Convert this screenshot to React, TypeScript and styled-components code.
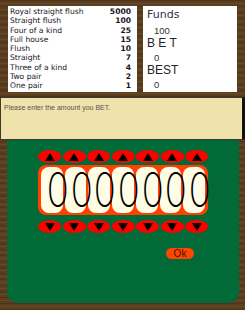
import React from "react";
import styled, {createGlobalStyle, css} from "styled-components";

const PAYOUTS: [string, number][] = [
    ["Royal straight flush", 5000],
    ["Straight flush", 100],
    ["Four of a kind", 25],
    ["Full house", 15],
    ["Flush", 10],
    ["Straight", 7],
    ["Three of a kind", 4],
    ["Two pair", 2],
    ["One pair", 1],
];

const DIGITS = [0, 0, 0, 0, 0, 0, 0];

const GlobalStyle = createGlobalStyle`
  html, body {
    margin: 0;
    padding: 0;
    background: #5a3c1f;
  }

  body {
    width: 245px;
    height: 310px;
    overflow: hidden;
    font-family: "Liberation Sans", Arial, sans-serif;
  }
`;

const wood = css`
  background-color: #5b3d20;
  background-image: repeating-linear-gradient(
    0deg,
    rgba(0, 0, 0, 0.16) 0 1px,
    transparent 1px 3px,
    rgba(255, 220, 160, 0.08) 3px 4px,
    transparent 4px 6px
  );
`;

const Triangle: React.FC<{down?: boolean}> = ({down}) => (
    <svg width="10" height="8" viewBox="0 0 10 8">
        {down
            ? <polygon points="0,0 10,0 5,8" fill="#000"/>
            : <polygon points="5,0 10,8 0,8" fill="#000"/>}
    </svg>
);

export default function App() {
    return (
        <>
            <GlobalStyle/>
            <Screen>
                <TopFrame>
                    <PayTable>
                        {PAYOUTS.map(([hand, pay]) => (
                            <PayRow key={hand}>
                                <span>{hand}</span>
                                <Payout>{pay}</Payout>
                            </PayRow>
                        ))}
                    </PayTable>
                    <FundsPanel>
                        <FundsTitle>Funds</FundsTitle>
                        <Value>100</Value>
                        <Label>B E T</Label>
                        <Value>0</Value>
                        <Label>BEST</Label>
                        <Value>0</Value>
                    </FundsPanel>
                </TopFrame>
                <MessageBar>Please enter the amount you BET.</MessageBar>
                <TableArea>
                    <Felt>
                        <ArrowRow>
                            {DIGITS.map((_, i) => (
                                <ArrowButton key={i}><Triangle/></ArrowButton>
                            ))}
                        </ArrowRow>
                        <DigitPanel>
                            {DIGITS.map((d, i) => (
                                <DigitCell key={i}><Digit>{d}</Digit></DigitCell>
                            ))}
                        </DigitPanel>
                        <ArrowRow $down>
                            {DIGITS.map((_, i) => (
                                <ArrowButton key={i}><Triangle down/></ArrowButton>
                            ))}
                        </ArrowRow>
                        <OkRow>
                            <OkButton>Ok</OkButton>
                        </OkRow>
                    </Felt>
                </TableArea>
            </Screen>
        </>
    );
}

const Screen = styled.div`
  width: 245px;
  height: 310px;
  display: flex;
  flex-direction: column;
`

const TopFrame = styled.div`
  ${wood};
  height: 97px;
  box-sizing: border-box;
  padding: 6px 8px 5px 8px;
  display: flex;
  gap: 6px;
`

const PayTable = styled.div`
  width: 129px;
  box-sizing: border-box;
  background: #fff;
  padding: 1px 6px 0 2px;
  font-family: "DejaVu Sans", Verdana, sans-serif;
  font-size: 7.6px;
  line-height: 9.3px;
  color: #161622;
`

const PayRow = styled.div`
  display: flex;
  justify-content: space-between;
`

const Payout = styled.span`
  font-weight: bold;
`

const FundsPanel = styled.div`
  width: 94px;
  box-sizing: border-box;
  background: #fff;
  padding: 2px 4px 0 4px;
  display: flex;
  flex-direction: column;
  color: #222;
`

const FundsTitle = styled.div`
  font-family: "DejaVu Sans", Verdana, sans-serif;
  font-size: 11px;
  line-height: 14px;
  color: #2b3445;
`

const Label = styled.div`
  margin-top: -3px;
  font-size: 12px;
  line-height: 12px;
`

const Value = styled.div`
  padding-left: 7px;
  font-size: 9.5px;
  line-height: 18px;
  color: #333;
`

const MessageBar = styled.div`
  height: 43px;
  box-sizing: border-box;
  background: #efe2ab;
  border: 1px solid #3d3a2c;
  border-right: 3px solid #111;
  padding: 5px 3px 0 3px;
  font-size: 7px;
  line-height: 9px;
  color: #555;
`

const TableArea = styled.div`
  ${wood};
  flex: 1;
  padding: 0 6px 7px 7px;
  display: flex;
`

const Felt = styled.div`
  flex: 1;
  background: #026a37;
  border-radius: 0 0 11px 11px;
  padding-top: 10px;
  display: flex;
  flex-direction: column;
  align-items: center;
`

const ArrowRow = styled.div<{$down?: boolean}>`
  display: flex;
  gap: 1.5px;
  margin-top: ${p => (p.$down ? "5px" : "0")};
`

const ArrowButton = styled.div`
  width: 23px;
  height: 13px;
  border-radius: 50%;
  background: #ff0000;
  display: flex;
  align-items: center;
  justify-content: center;
`

const DigitPanel = styled.div`
  width: 170px;
  box-sizing: border-box;
  margin-top: 2px;
  padding: 2px 3px;
  background: #ff4000;
  border-radius: 8px;
  display: flex;
  gap: 2px;
`

const DigitCell = styled.div`
  flex: 1;
  min-width: 0;
  height: 46px;
  background: #fffde6;
  border-radius: 8px;
  display: flex;
  align-items: center;
  justify-content: center;
`

const Digit = styled.span`
  display: inline-block;
  width: 14px;
  text-align: center;
  font-family: Inter, "Liberation Sans", sans-serif;
  font-weight: 200;
  font-size: 48px;
  line-height: 1;
  color: #000;
  transform: scaleX(0.76);
`

const OkRow = styled.div`
  width: 170px;
  box-sizing: border-box;
  padding-right: 14px;
  margin-top: 15px;
  display: flex;
  justify-content: flex-end;
`

const OkButton = styled.button`
  width: 28px;
  height: 11px;
  padding: 0;
  border: none;
  border-radius: 6px;
  background: #ff4500;
  font-family: "Liberation Sans", Arial, sans-serif;
  font-size: 10px;
  line-height: 11px;
  color: #3a1a00;
`
